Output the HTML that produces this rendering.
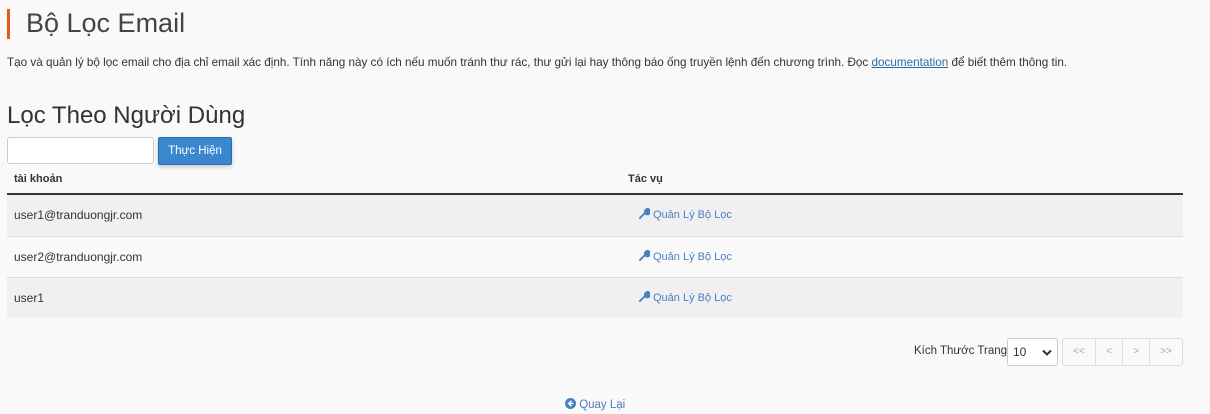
<!DOCTYPE html>
<html><head><meta charset="utf-8"><style>
body{margin:0;background:#f9f9f9;font-family:"Liberation Sans","DejaVu Sans",sans-serif;color:#333;width:1210px;height:414px;overflow:hidden;position:relative}
.a{position:absolute;white-space:nowrap}
.bar{left:7px;top:9px;width:3px;height:30px;background:#e8571f}
h1{margin:0;font-weight:300;font-size:27px;left:26px;top:8px;color:#444}
.desc{left:7px;top:56px;font-size:11.7px;color:#333}
.desc a{color:#2e6da4}
h2{margin:0;font-weight:normal;font-size:24px;left:7px;top:102px}
.inp{left:7px;top:137px;width:147px;height:27px;border:1px solid #ccc;border-radius:3px;background:#fff;box-sizing:border-box}
.btn{left:158px;top:137px;width:74px;height:28px;background:#3b87cf;border:1px solid #2e6da4;box-sizing:border-box;border-radius:2px;color:#fff;font-size:11.5px;text-align:center;line-height:26px;box-shadow:0 2px 4px rgba(0,0,0,.2)}
.th{top:173px;font-size:11px;font-weight:bold}
.line{left:7px;top:193px;width:1176px;height:2px;background:#333}
.row{left:7px;width:1176px;border-bottom:1px solid #ddd;font-size:12px}
.row span{position:absolute;left:7px}
.row b{position:absolute;left:632px;font-weight:normal;color:#4a7fc0;font-size:11px}
.row b svg{vertical-align:-1px;margin-right:3px}
.pg{top:338px;height:28px;border:1px solid #ddd;box-sizing:border-box;background:#f9f9f9}
</style></head><body>
<div class="a bar"></div>
<h1 class="a">Bộ Lọc Email</h1>
<div class="a desc">Tạo và quản lý bộ lọc email cho địa chỉ email xác định. Tính năng này có ích nếu muốn tránh thư rác, thư gửi lại hay thông báo ống truyền lệnh đến chương trình. Đọc <a href="#">documentation</a> để biết thêm thông tin.</div>
<h2 class="a">Lọc Theo Người Dùng</h2>
<div class="a inp"></div>
<div class="a btn">Thực Hiện</div>
<div class="a th" style="left:14px">tài khoản</div>
<div class="a th" style="left:628px">Tác vụ</div>
<div class="a line"></div>
<div class="a row" style="top:195px;height:41px;background:#f0f0f0;line-height:40px"><span>user1@tranduongjr.com</span><b><svg width="11" height="11" viewBox="0 0 12 12"><path d="M1 11 L6 6 M6.5 5.5 a3 3 0 1 0 2-4.5 l-1.5 1.5 .5 1.5 1.5.5 1.5-1.5 a3 3 0 0 1-4 3z" stroke="#4a7fc0" stroke-width="2" fill="#4a7fc0" stroke-linecap="round"/></svg>Quản Lý Bộ Lọc</b></div>
<div class="a row" style="top:237px;height:40px;background:#f9f9f9;line-height:40px"><span>user2@tranduongjr.com</span><b><svg width="11" height="11" viewBox="0 0 12 12"><path d="M1 11 L6 6 M6.5 5.5 a3 3 0 1 0 2-4.5 l-1.5 1.5 .5 1.5 1.5.5 1.5-1.5 a3 3 0 0 1-4 3z" stroke="#4a7fc0" stroke-width="2" fill="#4a7fc0" stroke-linecap="round"/></svg>Quản Lý Bộ Lọc</b></div>
<div class="a row" style="top:278px;height:40px;background:#f0f0f0;line-height:40px;border-bottom:none"><span>user1</span><b><svg width="11" height="11" viewBox="0 0 12 12"><path d="M1 11 L6 6 M6.5 5.5 a3 3 0 1 0 2-4.5 l-1.5 1.5 .5 1.5 1.5.5 1.5-1.5 a3 3 0 0 1-4 3z" stroke="#4a7fc0" stroke-width="2" fill="#4a7fc0" stroke-linecap="round"/></svg>Quản Lý Bộ Lọc</b></div>
<div class="a" style="left:914px;top:345px;font-size:11.5px">Kích Thước Trang</div>
<div class="a" style="left:1007px;top:338px;width:51px;height:28px;border:1px solid #ccc;border-radius:3px;background:#fff;box-sizing:border-box;font-size:12px;padding:6px 5px">10<svg style="position:absolute;right:5px;top:10px" width="10" height="7" viewBox="0 0 10 7"><path d="M1 1.5 L5 5.5 L9 1.5" stroke="#333" stroke-width="2" fill="none"/></svg></div>
<div class="a pg" style="left:1062px;width:34px;border-radius:3px 0 0 3px;font-size:10px;color:#aaa;text-align:center;line-height:26px">&lt;&lt;</div>
<div class="a pg" style="left:1095px;width:28px;font-size:10px;color:#aaa;text-align:center;line-height:26px">&lt;</div>
<div class="a pg" style="left:1122px;width:28px;font-size:10px;color:#aaa;text-align:center;line-height:26px">&gt;</div>
<div class="a pg" style="left:1149px;width:34px;border-radius:0 3px 3px 0;font-size:10px;color:#aaa;text-align:center;line-height:26px">&gt;&gt;</div>
<div class="a" style="left:565px;top:398px;font-size:11.5px;color:#4a7fc0"><svg width="11" height="11" viewBox="0 0 12 12" style="vertical-align:-1px"><circle cx="6" cy="6" r="6" fill="#4a7fc0"/><path d="M7 3 L4 6 L7 9 M4 6 H9" stroke="#fff" stroke-width="1.6" fill="none"/></svg> Quay Lại</div>
</body></html>
